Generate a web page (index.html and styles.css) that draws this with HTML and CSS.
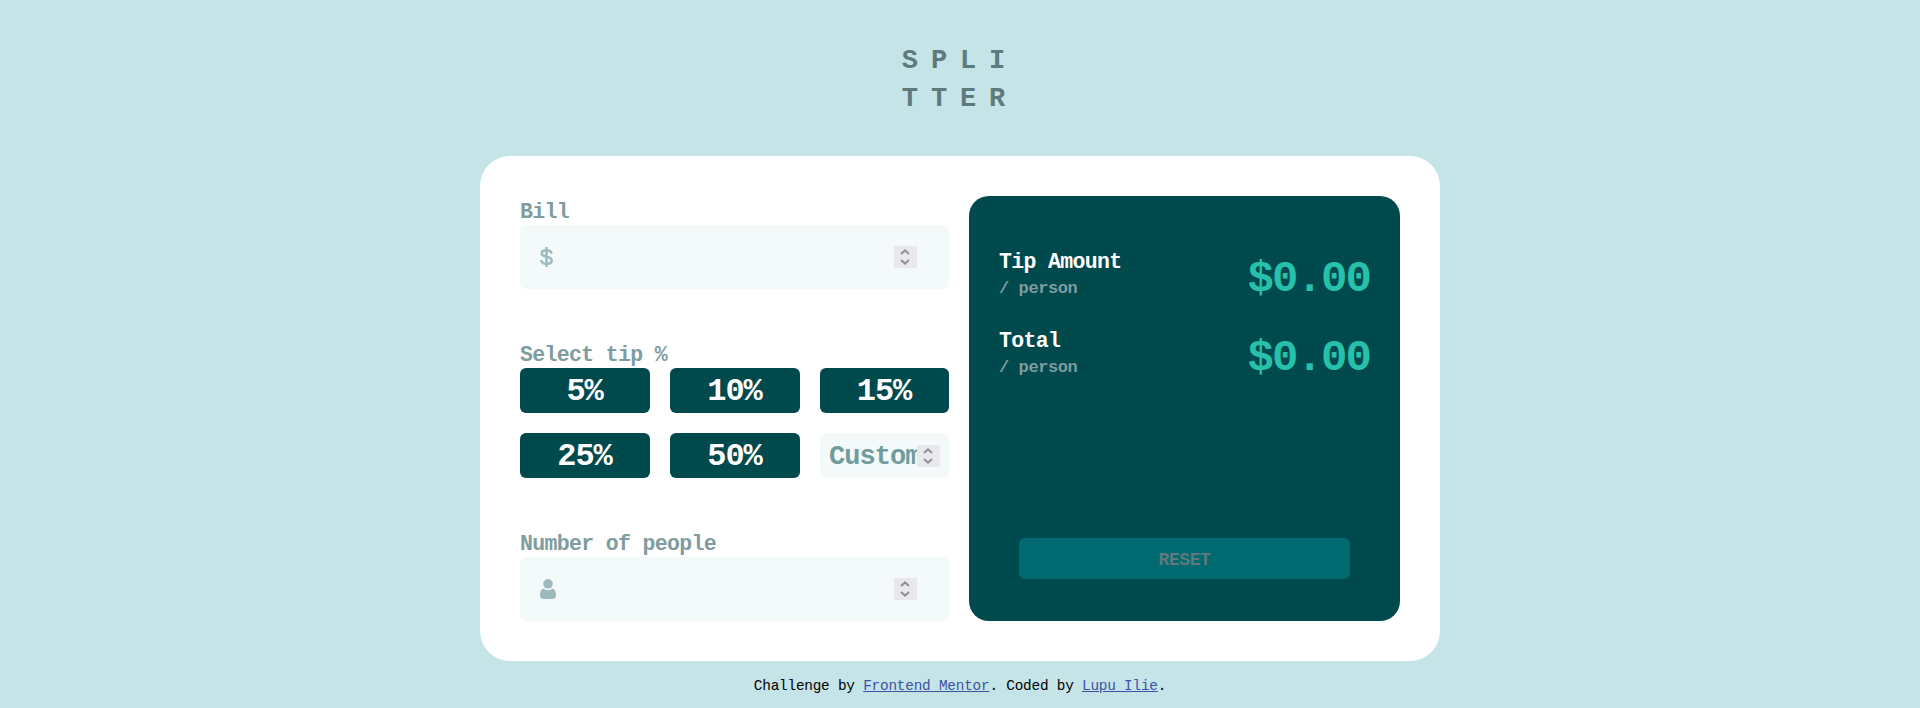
FILE: index.html
```html
<!DOCTYPE html>
<html lang="en">
<head>
<meta charset="utf-8">
<title>Splitter</title>
<link rel="stylesheet" href="styles.css">
</head>
<body>
<h1 class="logo">SPLI<br>TTER</h1>
<main class="card">
  <section class="form">
    <div class="group">
      <div class="label">Bill</div>
      <div class="field">
        <svg class="dollar" width="13" height="20" viewBox="0 0 13 20"><path d="M11.4 6.8C11.3 4.4 9.5 3.2 6.5 3.2C3.5 3.2 1.7 4.4 1.7 6.3C1.7 8.6 3.6 9.2 6.5 9.7C9.7 10.3 11.7 11.2 11.7 13.6C11.7 15.7 9.6 16.9 6.5 16.9C3.3 16.9 1.4 15.5 1.2 12.8M6.5 0V20"/></svg>
        <span class="spinner"><svg width="10" height="16" viewBox="0 0 10 16"><path d="M1 5L5 1.4L9 5M1 11L5 14.6L9 11"/></svg></span>
      </div>
    </div>
    <div class="group">
      <div class="label">Select tip %</div>
      <div class="tips">
        <button class="tip">5%</button>
        <button class="tip">10%</button>
        <button class="tip">15%</button>
        <button class="tip">25%</button>
        <button class="tip">50%</button>
        <div class="custom">
          <span class="custom-text">Custom</span>
          <span class="spinner"><svg width="10" height="16" viewBox="0 0 10 16"><path d="M1 5L5 1.4L9 5M1 11L5 14.6L9 11"/></svg></span>
        </div>
      </div>
    </div>
    <div class="group">
      <div class="label">Number of people</div>
      <div class="field">
        <svg class="person" width="16" height="20" viewBox="0 0 16 20"><circle cx="8" cy="4.8" r="4.8"/><path d="M3.5 9.8Q8 12.6 12.5 9.8C14.6 10 16 12.6 16 16.2C16 18.7 14.8 20 12.7 20H3.3C1.2 20 0 18.7 0 16.2C0 12.6 1.4 10 3.5 9.8Z"/></svg>
        <span class="spinner"><svg width="10" height="16" viewBox="0 0 10 16"><path d="M1 5L5 1.4L9 5M1 11L5 14.6L9 11"/></svg></span>
      </div>
    </div>
  </section>
  <section class="results">
    <div class="rows">
      <div class="row">
        <div class="names"><div class="name">Tip Amount</div><div class="per">/ person</div></div>
        <div class="amount">$0.00</div>
      </div>
      <div class="row">
        <div class="names"><div class="name">Total</div><div class="per">/ person</div></div>
        <div class="amount">$0.00</div>
      </div>
    </div>
    <button class="reset">RESET</button>
  </section>
</main>
<footer class="credit">Challenge by <a href="#">Frontend Mentor</a>. Coded by <a href="#">Lupu Ilie</a>.</footer>
</body>
</html>
```
FILE: styles.css
```css
* { box-sizing: border-box; }
body {
  margin: 0;
  height: 708px;
  overflow: hidden;
  background: #c5e4e7;
  font-family: "Liberation Mono", monospace;
  font-weight: 700;
  display: flex;
  flex-direction: column;
  align-items: center;
}
.logo {
  margin: 0;
  padding-top: 42px;
  height: 156px;
  font-size: 27px;
  line-height: 38px;
  letter-spacing: 12.9px;
  color: #5e7a7d;
}
.card {
  width: 960px;
  height: 505px;
  flex: none;
  padding: 40px;
  border-radius: 30px;
  background: #fff;
  display: grid;
  grid-template-columns: 429px 431px;
  gap: 20px;
}
.form {
  display: flex;
  flex-direction: column;
  justify-content: space-between;
}
.label {
  height: 29px;
  padding-top: 4px;
  font-size: 21.5px;
  line-height: 25px;
  letter-spacing: -0.66px;
  color: #7f9c9f;
}
.field {
  height: 64px;
  padding: 0 32px 0 20px;
  border-radius: 6px;
  background: #f4fafa;
  display: flex;
  align-items: center;
  justify-content: space-between;
}
.dollar { fill: none; stroke: #9dbbbe; stroke-width: 2.5; }
.person { fill: #9dbbbe; }
.spinner {
  width: 23px;
  height: 22px;
  flex: none;
  background: #e9e8ed;
  display: flex;
  align-items: center;
  justify-content: center;
}
.spinner svg { fill: none; stroke: #8f8f9d; stroke-width: 2; margin-right: 1px; }
.tips {
  display: grid;
  grid-template-columns: 130px 130px 129px;
  grid-auto-rows: 45px;
  gap: 20px;
}
.tip, .reset {
  border: 0;
  padding: 0;
  border-radius: 6px;
  font-family: inherit;
  font-weight: 700;
}
.tip {
  background: #00494d;
  color: #fff;
  font-size: 32px;
  line-height: 42px;
  padding-top: 3px;
  padding-right: 1px;
  letter-spacing: -1.1px;
}
.custom {
  border-radius: 6px;
  background: #f4fafa;
  padding: 0 9px;
  display: flex;
  align-items: center;
}
.custom-text {
  flex: none;
  font-size: 27px;
  line-height: 42px;
  padding-top: 3px;
  letter-spacing: -0.95px;
  color: #709c9e;
}
.custom .spinner {
  margin-left: auto;
  margin-right: 0;
  position: relative;
}
.custom-text { margin-right: -5px; }
.results {
  border-radius: 20px;
  background: #00494d;
  padding: 51px 30px 42px;
  display: flex;
  flex-direction: column;
  justify-content: space-between;
}
.rows { display: grid; gap: 25px; }
.row {
  height: 54px;
  display: flex;
  align-items: center;
  justify-content: space-between;
}
.name {
  font-size: 21.5px;
  line-height: 30px;
  letter-spacing: -0.66px;
  color: #fff;
}
.per {
  font-size: 17px;
  line-height: 24px;
  letter-spacing: -0.4px;
  color: #7f9c9f;
}
.amount {
  padding-top: 10px;
  font-size: 44px;
  line-height: 54px;
  letter-spacing: -1.9px;
  color: #26c0ab;
}
.reset {
  height: 41px;
  margin: 0 20px;
  padding-top: 2px;
  background: #006a70;
  color: #5e7a7d;
  font-size: 18px;
  letter-spacing: -0.4px;
}
.credit {
  padding-top: 14px;
  font-size: 14.4px;
  line-height: 22px;
  letter-spacing: -0.22px;
  font-weight: 400;
  color: #000;
}
.credit a { color: #3e52a3; }
```
